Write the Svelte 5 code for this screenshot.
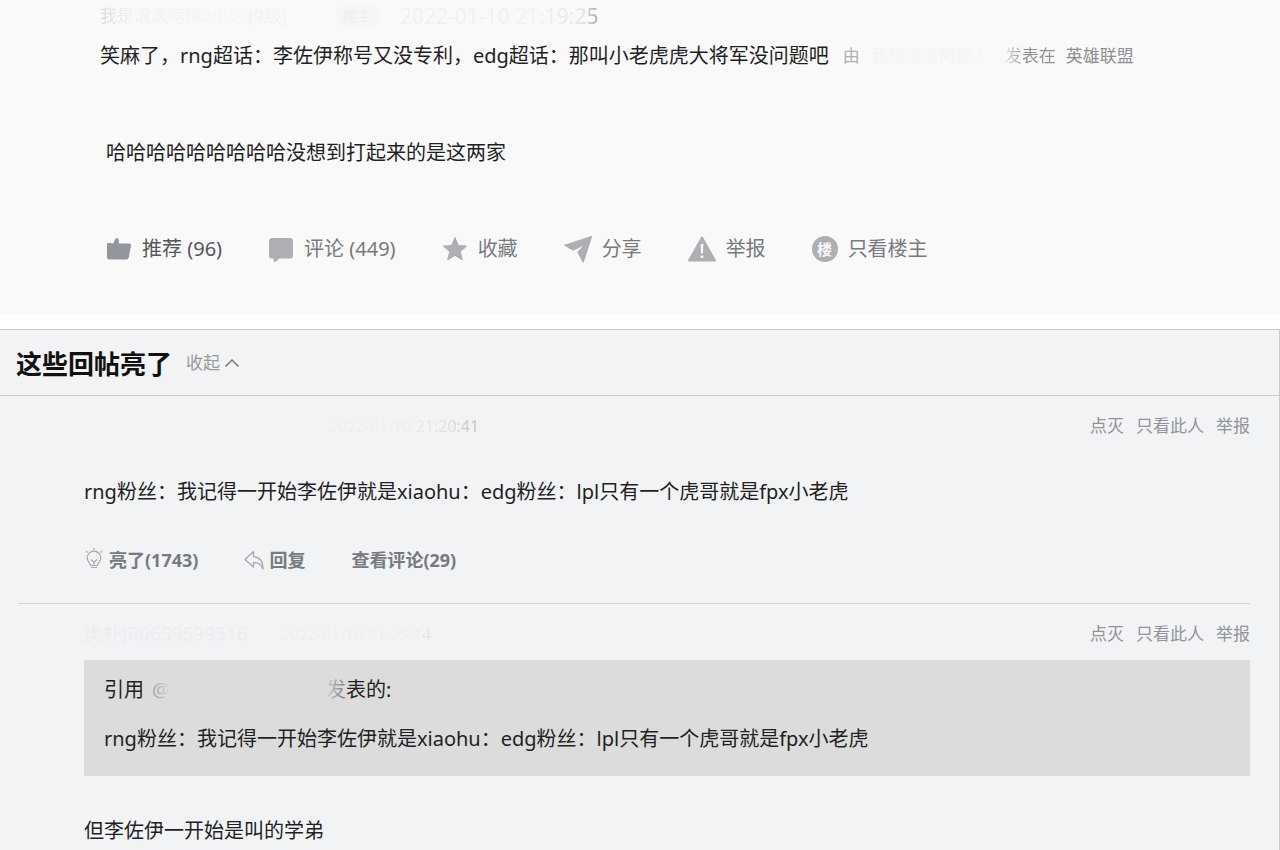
<script lang="ts">
    const quotedText = "rng粉丝：我记得一开始李佐伊就是xiaohu：edg粉丝：lpl只有一个虎哥就是fpx小老虎";
    const replyTools = ["点灭", "只看此人", "举报"];

    let collapsed = false;

    function onToggleClick() {
        collapsed = !collapsed;
    }
</script>

<article class="post">
    <header class="post-meta">
        <span class="author">我是滚滚阿姨2小时</span>
        <span class="level">(9级)</span>
        <span class="badge">楼主</span>
        <time class="post-time">2022-01-10 21:19:25</time>
    </header>
    <div class="post-title">
        <h1>笑麻了，rng超话：李佐伊称号又没专利，edg超话：那叫小老虎虎大将军没问题吧</h1>
        <p class="byline">
            <span class="by">由</span>
            <span class="by-author">我是滚滚阿姨2</span>
            <span class="by-in">发表在</span>
            <a href="#board">英雄联盟</a>
        </p>
    </div>
    <p class="post-body">哈哈哈哈哈哈哈哈哈没想到打起来的是这两家</p>
    <div class="post-actions">
        <button class="strong">
            <svg viewBox="0 0 26 26" width="26" height="26">
                <path fill="#92969d" d="M2 7h2.500q1 0 1 1v14.500q0 1-1 1H3q-2 0-2-2V9q0-2 1-2zM5 7.500h2.200L9 3.500q.4-1.500 1.800-1.500 2 0 2 2v3.500H23q2.400 0 2 2.200l-2.200 11.500q-.5 2.300-2.500 2.300H5z" />
            </svg>
            推荐 (96)
        </button>
        <button>
            <svg viewBox="0 0 26 26" width="26" height="26">
                <path fill="#adafb4" d="M4 2h18q3 0 3 3v15q0 2.500-3 2.500H11.500L7 26q-1 .4-1.200-.6L5.500 22.500H4q-3 0-3-2.500V5q0-3 3-3z" />
            </svg>
            评论 (449)
        </button>
        <button>
            <svg viewBox="0 0 26 26" width="26" height="26">
                <path fill="#adafb4" stroke="#adafb4" stroke-linejoin="round" d="M13 1.500l3.300 7.900 8.400.7-6.400 5.500 2 8.300-7.300-4.500-7.300 4.500 2-8.300L1.300 10.100l8.400-.7z" />
            </svg>
            收藏
        </button>
        <button>
            <svg viewBox="0 0 28 28" width="28" height="28">
                <path fill="#adafb4" d="M27.200 1L.6 9.800q-.8.500 0 1l8.400 5 9-4.300q.8-.2.200.4l-5 5.100 5.600 10.500q.6.600 1-.2L28 2q.2-1.200-.8-1z" />
            </svg>
            分享
        </button>
        <button>
            <svg viewBox="0 0 28 28" width="28" height="28">
                <path fill="#adafb4" stroke="#adafb4" stroke-width="2" stroke-linejoin="round" d="M14 2.500L1 25.500h26z" />
                <path fill="#f9f9f9" d="M12.600 9h2.800l-.5 9.500h-1.800zM12.600 20.500h2.800v2.500h-2.800z" />
            </svg>
            举报
        </button>
        <button>
            <span class="disc">楼</span>
            只看楼主
        </button>
    </div>
</article>

<section class="panel">
    <header class="panel-head">
        <h2>这些回帖亮了</h2>
        <button class="toggle" on:click={onToggleClick}>
            收起
            <svg viewBox="0 0 16 10" width="16" height="10">
                <path fill="none" stroke="#777" stroke-width="1.500" d="M1.500 8.500L8 2l6.500 6.500" />
            </svg>
        </button>
    </header>

    {#if !collapsed}
        <div class="reply">
            <div class="reply-meta">
                <time class="reply-time">2022-01-10 21:20:41</time>
                <nav>
                    {#each replyTools as tool}
                        <a href="#tool">{tool}</a>
                    {/each}
                </nav>
            </div>
            <p class="reply-body">{quotedText}</p>
            <div class="reply-actions">
                <button>
                    <svg viewBox="0 0 20 24" width="20" height="24">
                        <g fill="none" stroke="#a5a8ad" stroke-width="1.200">
                            <path d="M6.500 17.500c0-2.500-3.300-3.500-3.300-7.500a6.800 6.800 0 0 1 13.600 0c0 4-3.300 5-3.300 7.500zM7 19.500h6M7 11.500l3 3 3-3M10 14.500v3" />
                            <path d="M10 0v2M2 3l1.500 1.500M18 3l-1.500 1.500" />
                        </g>
                    </svg>
                    亮了(1743)
                </button>
                <button>
                    <svg viewBox="0 0 20 20" width="20" height="20">
                        <path fill="none" stroke="#a5a8ad" stroke-width="1.300" stroke-linejoin="round" d="M9.500 1.500L1 9.500l8.500 7.500v-4.500c5 0 7.500 1.500 9.500 6.500 0-8-3.500-12-9.500-12.500z" />
                    </svg>
                    回复
                </button>
                <button>查看评论(29)</button>
            </div>
        </div>

        <div class="reply">
            <div class="reply-meta">
                <span class="reply-author">虎扑JR0659599516</span>
                <time class="reply-time faded">2022-01-10 21:25:14</time>
                <nav>
                    {#each replyTools as tool}
                        <a href="#tool">{tool}</a>
                    {/each}
                </nav>
            </div>
            <blockquote>
                <p class="quote-head">
                    <span>引用</span>
                    <span class="quote-author">@</span>
                    <span><span class="quote-fade">发</span>表的:</span>
                </p>
                <p>{quotedText}</p>
            </blockquote>
            <p class="reply-text">但李佐伊一开始是叫的学弟</p>
        </div>
    {/if}
</section>

<style>
    :global(body) {
        margin: 0;
        background: #fff;
        color: #1f1f24;
        font-family: "Noto Sans", "Noto Sans CJK SC", sans-serif;
        font-size: 20px;
        line-height: 28px;
    }

    h1,
    h2,
    p,
    blockquote {
        margin: 0;
    }

    a {
        color: inherit;
        text-decoration: none;
    }

    button {
        display: flex;
        align-items: center;
        padding: 0;
        border: 0;
        background: none;
        color: inherit;
        font: inherit;
        white-space: nowrap;
        cursor: pointer;
    }

    .post {
        padding: 0 100px 51px;
        background: #f9f9f9;
    }

    .post-meta {
        display: flex;
        align-items: center;
        height: 32px;
        white-space: nowrap;
    }

    .author {
        width: 148px;
        font-size: 17px;
        color: transparent;
        background: linear-gradient(to right, #cfdbe6, #eef2f5 20%, #f3f5f6);
        background-clip: text;
    }

    .level {
        width: 88px;
        font-size: 18px;
        color: #f2f3f4;
    }

    .badge {
        width: 42px;
        margin-right: 22px;
        border-radius: 12px;
        background: #f6f6f6;
        color: #eeeeef;
        font-size: 14px;
        line-height: 24px;
        text-align: center;
    }

    .post-time {
        font-size: 21px;
        color: transparent;
        background: linear-gradient(to right, #f0f1f2 70%, #e4e5e7 92%, #a4a8ae);
        background-clip: text;
    }

    .post-title {
        display: flex;
        align-items: center;
        gap: 14px;
        height: 48px;
        white-space: nowrap;
    }

    h1 {
        font-size: 20px;
        font-weight: 400;
    }

    .byline {
        display: flex;
        color: #8d8f93;
        font-size: 17px;
    }

    .by {
        width: 28px;
        color: #b0b1b3;
    }

    .by-author {
        width: 134px;
        color: #f5f5f6;
    }

    .by-in {
        margin-right: 10px;
        color: transparent;
        background: linear-gradient(to right, #e4e4e5, #8d8f93 40%);
        background-clip: text;
    }

    .post-body {
        padding: 59px 6px 68px;
    }

    .post-actions {
        display: flex;
        gap: 46px;
        padding-left: 6px;
        color: #787a7e;
    }

    .post-actions button {
        gap: 10px;
    }

    .post-actions .strong {
        color: #55575b;
    }

    .disc {
        width: 26px;
        border-radius: 50%;
        background: #adafb4;
        color: #f9f9f9;
        font-size: 15px;
        font-weight: 700;
        line-height: 26px;
        text-align: center;
    }

    .panel {
        margin-top: 15px;
        padding-bottom: 5px;
        border: solid #c8c9ca;
        border-width: 1px 1px 0 0;
        background: #f1f3f5;
    }

    .panel-head {
        display: flex;
        align-items: center;
        gap: 14px;
        height: 65px;
        padding-left: 16px;
        border-bottom: 1px solid #c8c9ca;
    }

    h2 {
        padding-top: 2px;
        color: #111;
        font-size: 26px;
        line-height: 36px;
    }

    .toggle {
        gap: 4px;
        color: #999;
        font-size: 17px;
    }

    .reply {
        margin: 0 29px 0 18px;
        padding: 16px 0 29px 66px;
        border-bottom: 1px solid #d3d5d7;
    }

    .reply:last-child {
        padding-bottom: 0;
        border-bottom: 0;
    }

    .reply-meta {
        display: flex;
        align-items: center;
        font-size: 16px;
    }

    .reply-author {
        width: 196px;
        color: #ebeef1;
        font-size: 19px;
    }

    .reply-time {
        color: transparent;
        background: linear-gradient(to right, #eceef0 50%, #dfe1e3 80%, #b9bcc0);
        background-clip: text;
    }

    .reply-time:first-child {
        margin-left: 244px;
    }

    .reply-time.faded {
        background: linear-gradient(to right, #eceef0 90%, #dfe2e4);
        background-clip: text;
    }

    nav {
        display: flex;
        gap: 12px;
        margin-left: auto;
        color: #929497;
        font-size: 17px;
    }

    .reply-body {
        padding: 38px 0 40px;
    }

    .reply-actions {
        display: flex;
        gap: 46px;
        color: #777a7f;
        font-size: 18px;
        font-weight: 700;
    }

    .reply-actions button {
        gap: 5px;
    }

    blockquote {
        margin-top: 12px;
        padding: 16px 20px 23px;
        background: #dcdcdc;
    }

    .quote-head {
        display: flex;
        gap: 8px;
        margin-bottom: 21px;
    }

    .quote-author {
        width: 166px;
        color: transparent;
        background: linear-gradient(to right, #999, #dcdcdc 18px);
        background-clip: text;
    }

    .quote-fade {
        color: transparent;
        background: linear-gradient(to right, #d4d4d4, #777);
        background-clip: text;
    }

    .reply-text {
        margin-top: 41px;
    }
</style>
